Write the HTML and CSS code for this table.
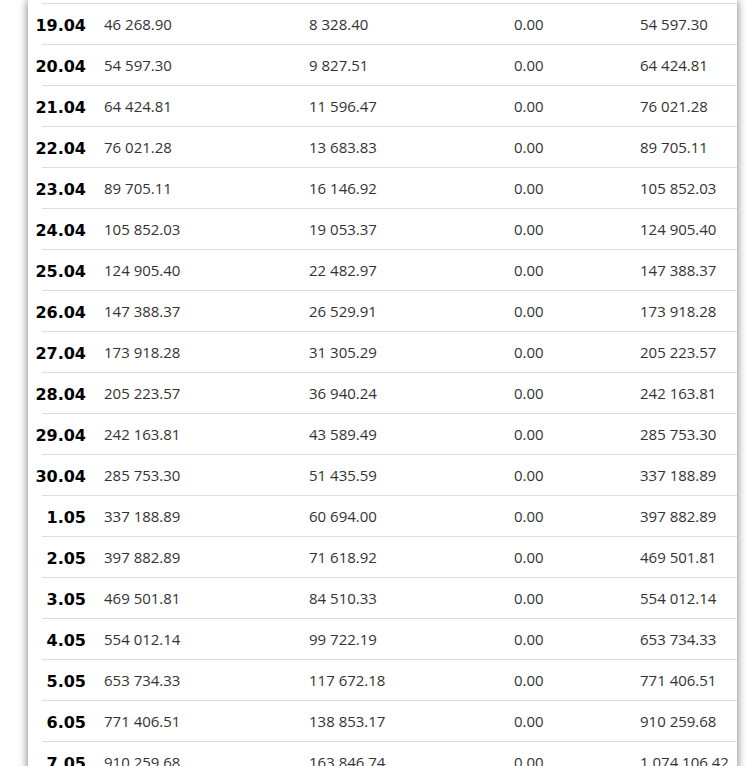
FILE: index.html
```html
<!DOCTYPE html>
<html>
<head>
<meta charset="utf-8">
<link rel="stylesheet" href="styles.css">
</head>
<body>
<div class="panel">
  <div class="table">
    <div class="row"><span class="date">19.04</span><span class="c c1">46 268.90</span><span class="c c2">8 328.40</span><span class="c c3">0.00</span><span class="c c4">54 597.30</span></div>
    <div class="row"><span class="date">20.04</span><span class="c c1">54 597.30</span><span class="c c2">9 827.51</span><span class="c c3">0.00</span><span class="c c4">64 424.81</span></div>
    <div class="row"><span class="date">21.04</span><span class="c c1">64 424.81</span><span class="c c2">11 596.47</span><span class="c c3">0.00</span><span class="c c4">76 021.28</span></div>
    <div class="row"><span class="date">22.04</span><span class="c c1">76 021.28</span><span class="c c2">13 683.83</span><span class="c c3">0.00</span><span class="c c4">89 705.11</span></div>
    <div class="row"><span class="date">23.04</span><span class="c c1">89 705.11</span><span class="c c2">16 146.92</span><span class="c c3">0.00</span><span class="c c4">105 852.03</span></div>
    <div class="row"><span class="date">24.04</span><span class="c c1">105 852.03</span><span class="c c2">19 053.37</span><span class="c c3">0.00</span><span class="c c4">124 905.40</span></div>
    <div class="row"><span class="date">25.04</span><span class="c c1">124 905.40</span><span class="c c2">22 482.97</span><span class="c c3">0.00</span><span class="c c4">147 388.37</span></div>
    <div class="row"><span class="date">26.04</span><span class="c c1">147 388.37</span><span class="c c2">26 529.91</span><span class="c c3">0.00</span><span class="c c4">173 918.28</span></div>
    <div class="row"><span class="date">27.04</span><span class="c c1">173 918.28</span><span class="c c2">31 305.29</span><span class="c c3">0.00</span><span class="c c4">205 223.57</span></div>
    <div class="row"><span class="date">28.04</span><span class="c c1">205 223.57</span><span class="c c2">36 940.24</span><span class="c c3">0.00</span><span class="c c4">242 163.81</span></div>
    <div class="row"><span class="date">29.04</span><span class="c c1">242 163.81</span><span class="c c2">43 589.49</span><span class="c c3">0.00</span><span class="c c4">285 753.30</span></div>
    <div class="row"><span class="date">30.04</span><span class="c c1">285 753.30</span><span class="c c2">51 435.59</span><span class="c c3">0.00</span><span class="c c4">337 188.89</span></div>
    <div class="row"><span class="date">1.05</span><span class="c c1">337 188.89</span><span class="c c2">60 694.00</span><span class="c c3">0.00</span><span class="c c4">397 882.89</span></div>
    <div class="row"><span class="date">2.05</span><span class="c c1">397 882.89</span><span class="c c2">71 618.92</span><span class="c c3">0.00</span><span class="c c4">469 501.81</span></div>
    <div class="row"><span class="date">3.05</span><span class="c c1">469 501.81</span><span class="c c2">84 510.33</span><span class="c c3">0.00</span><span class="c c4">554 012.14</span></div>
    <div class="row"><span class="date">4.05</span><span class="c c1">554 012.14</span><span class="c c2">99 722.19</span><span class="c c3">0.00</span><span class="c c4">653 734.33</span></div>
    <div class="row"><span class="date">5.05</span><span class="c c1">653 734.33</span><span class="c c2">117 672.18</span><span class="c c3">0.00</span><span class="c c4">771 406.51</span></div>
    <div class="row"><span class="date">6.05</span><span class="c c1">771 406.51</span><span class="c c2">138 853.17</span><span class="c c3">0.00</span><span class="c c4">910 259.68</span></div>
    <div class="row"><span class="date">7.05</span><span class="c c1">910 259.68</span><span class="c c2">163 846.74</span><span class="c c3">0.00</span><span class="c c4">1 074 106.42</span></div>
  </div>
</div>
</body>
</html>
```

FILE: styles.css
```css
html, body {
  margin: 0;
  padding: 0;
  background: #ffffff;
  overflow: hidden;
  height: 766px;
}
.panel {
  margin-left: 28px;
  width: 709px;
  height: 800px;
  background: #ffffff;
  box-shadow: 0 0 9px rgba(0, 0, 0, 0.55);
  overflow: hidden;
}
.table {
  padding-top: 3px;
}
.table::before {
  content: "";
  display: block;
  margin-left: 14px;
  border-top: 1px solid #dddddd;
}
.row {
  display: flex;
  align-items: center;
  height: 40px;
  margin-left: 14px;
  border-bottom: 1px solid #dddddd;
}
.date {
  margin-left: -14px;
  width: 58px;
  flex: none;
  text-align: right;
  font-family: "DejaVu Sans", sans-serif;
  font-weight: bold;
  font-size: 16px;
  color: #000000;
  margin-right: 18px;
  padding-top: 3px;
}
.c {
  flex: none;
  font-family: "Open Sans", sans-serif;
  font-size: 15px;
  color: #333333;
}
.c1 { width: 205px; }
.c2 { width: 205px; }
.c3 { width: 126px; }
.c4 { width: 96px; }
```
